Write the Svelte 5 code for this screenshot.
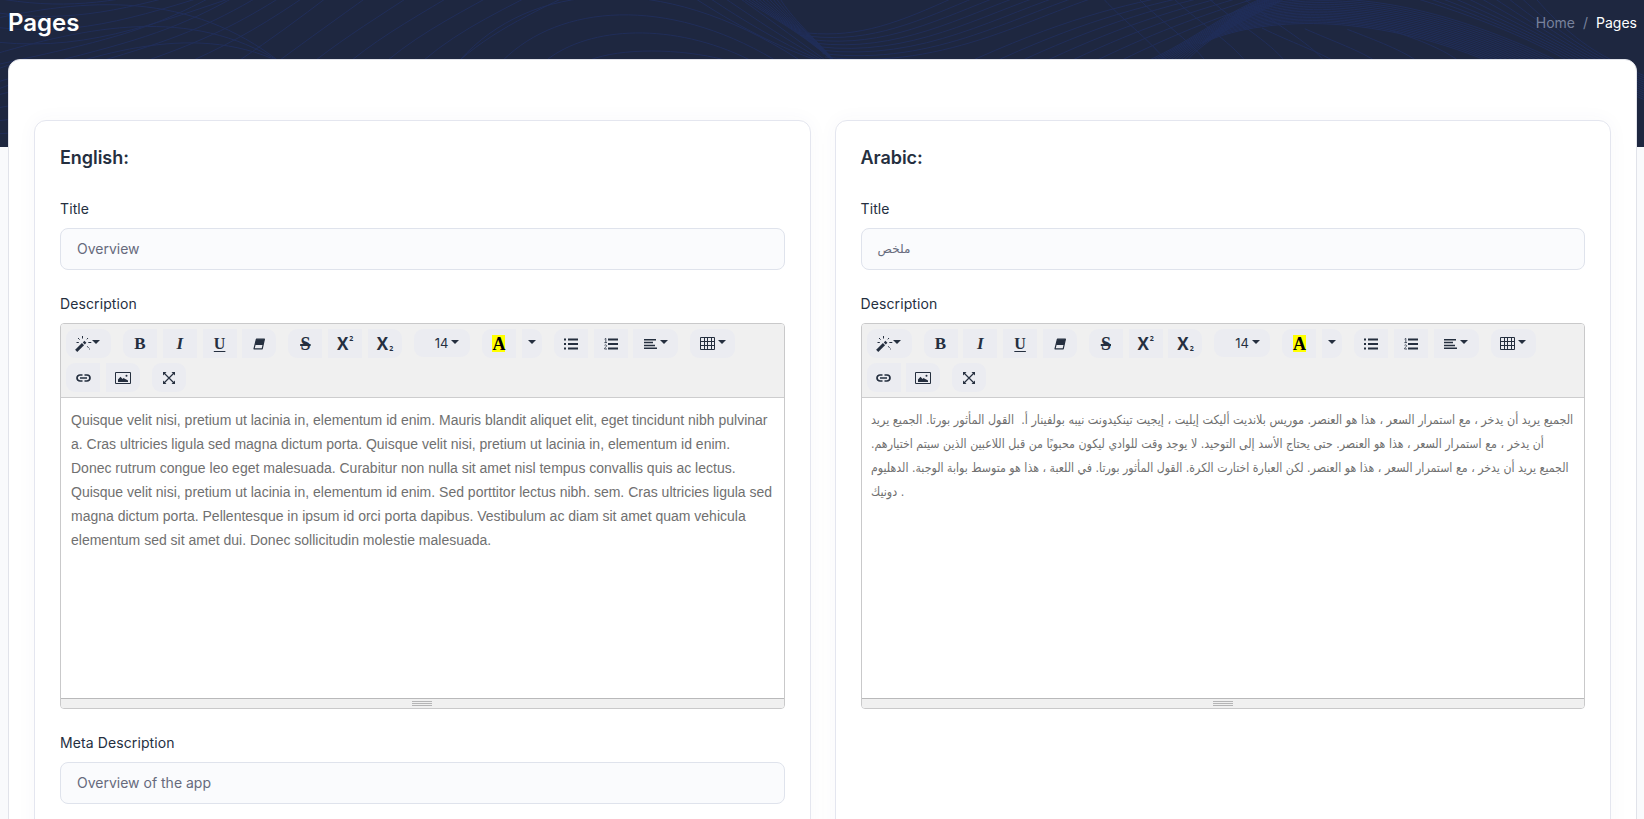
<script>
  // Lines morph evenly from one cubic curve to another; each curve is 8 numbers.
  const families = [
    { n: 3, a: [-20, 22, 90, -4, 190, -8, 280, 62], b: [-10, 92, 90, 55, 190, 20, 280, 62] },
    { n: 4, a: [-20, -5, 50, 10, 100, 5, 165, -10], b: [-20, 40, 80, 55, 150, 25, 255, -10] },
    { n: 6, a: [0, 64, 110, 40, 150, 30, 215, -5], b: [240, 60, 270, 40, 300, 18, 330, -5] },
    { n: 6, a: [280, 60, 310, 38, 335, 20, 370, -5], b: [460, 60, 500, 25, 550, 5, 600, -20] },
    { n: 4, a: [460, 60, 530, -18, 660, -30, 798, 59], b: [590, 60, 620, 48, 680, 48, 725, 60] },
    { n: 4, a: [690, -5, 720, 15, 770, 45, 822, 62], b: [735, -5, 760, 12, 790, 35, 828, 62] },
    { n: 11, a: [738, -5, 765, 14, 795, 28, 832, 60], b: [778, -5, 788, 14, 808, 32, 834, 60] },
    { n: 8, a: [808, 33, 860, 38, 900, 22, 955, -3], b: [825, 57, 950, 72, 1040, 10, 1120, -10] },
    { n: 7, a: [960, 66, 1060, 20, 1120, 5, 1190, -8], b: [1110, 66, 1170, 36, 1210, 20, 1280, -4] },
    { n: 12, a: [1145, 62, 1195, 40, 1230, 8, 1270, -4], b: [1186, 62, 1205, 38, 1245, 20, 1290, -4] },
    { n: 5, a: [1100, -5, 1120, 18, 1150, 40, 1167, 62], b: [1240, -5, 1270, 22, 1310, 42, 1325, 62] },
    { n: 4, a: [1262, 28, 1290, 42, 1320, 52, 1335, 62], b: [1390, 30, 1420, 40, 1445, 50, 1460, 62] },
    { n: 16, a: [1200, 44, 1260, 16, 1370, 12, 1490, 62], b: [1240, 10, 1330, -14, 1430, 0, 1560, 62] },
    { n: 10, a: [1400, -6, 1460, 10, 1530, 38, 1570, 62], b: [1532, -6, 1555, 22, 1585, 48, 1616, 62] },
    { n: 6, a: [-5, 70, 0, 68, 6, 66, 12, 64], b: [-5, 134, 0, 134, 6, 133, 12, 133] },
    { n: 12, a: [1630, 70, 1636, 72, 1640, 74, 1650, 78], b: [1630, 94, 1636, 96, 1640, 98, 1650, 102] }
  ];
  const waves = families.flatMap(({ n, a, b }) =>
    Array.from({ length: n }, (_, i) => {
      const p = a.map((v, k) => +(v + ((b[k] - v) * i) / (n - 1)).toFixed(1));
      return `M${p[0]} ${p[1]}C${p[2]} ${p[3]} ${p[4]} ${p[5]} ${p[6]} ${p[7]}`;
    })
  );

  const english = [
    'Quisque velit nisi, pretium ut lacinia in, elementum id enim. Mauris blandit aliquet elit, eget tincidunt nibh pulvinar',
    'a. Cras ultricies ligula sed magna dictum porta. Quisque velit nisi, pretium ut lacinia in, elementum id enim.',
    'Donec rutrum congue leo eget malesuada. Curabitur non nulla sit amet nisl tempus convallis quis ac lectus.',
    'Quisque velit nisi, pretium ut lacinia in, elementum id enim. Sed porttitor lectus nibh. sem. Cras ultricies ligula sed',
    'magna dictum porta. Pellentesque in ipsum id orci porta dapibus. Vestibulum ac diam sit amet quam vehicula',
    'elementum sed sit amet dui. Donec sollicitudin molestie malesuada.'
  ];
  const arabic = [
    { w: 702, dir: 'rtl', t: 'الجميع يريد أن يدخر ، مع استمرار السعر ، هذا هو العنصر. موريس بلانديت أليكت إيليت ، إيجيت تينكيدونت نيبه بولفينار أ.\u00a0 القول المأثور بورتا. الجميع يريد' },
    { w: 673, dir: 'rtl', t: 'أن يدخر ، مع استمرار السعر ، هذا هو العنصر. حتى يحتاج الأسد إلى التوحيد. لا يوجد وقت للوادي ليكون محبوبًا من قبل اللاعبين الذين سيتم اختيارهم.' },
    { w: 698, dir: 'rtl', t: 'الجميع يريد أن يدخر ، مع استمرار السعر ، هذا هو العنصر. لكن العبارة اختارت الكرة. القول المأثور بورتا. في اللعبة ، هذا هو متوسط بوابة الوجبة. الدهليوم' },
    { w: 33, dir: 'ltr', t: 'دونيك .' }
  ];
  const tools = [
    ['wand'], ['bold', 'italic', 'underline', 'eraser'], ['strike', 'sup', 'sub'], ['size'],
    ['color', 'more'], ['ul', 'ol', 'align'], ['table'], ['link', 'image'], ['full']
  ];
  const columns = [
    { lang: 'English', title: 'Overview', meta: 'Overview of the app' },
    { lang: 'Arabic', title: 'ملخص', meta: null }
  ];

  // Condenses a line horizontally so that it takes the given width.
  function fit(node, width) {
    const apply = () => {
      node.style.transform = 'none';
      node.style.transform = `scaleX(${width / node.offsetWidth})`;
    };
    apply();
    document.fonts?.ready.then(apply);
  }
</script>

{#snippet caret()}<i class="caret"></i>{/snippet}

{#snippet icon(name)}
  {#if name === 'wand'}
    <svg width="17" height="16" viewBox="0 0 17 16"><path d="M1.200 14.800 8 8.200" stroke-width="3" /><path d="m8.800 7.400 1.600-1.600" stroke-width="2.800" /><path d="M7.500 0v2.500M3 2l1.600 1.600M1.500 6.500h2.300M13 2l-1.200 1.300M13.300 6.500h3M12.300 10.300l1.200 1.500M14.200 13h.8" stroke-width="1" /></svg>{@render caret()}
  {:else if name === 'bold'}<b class="glyph">B</b>
  {:else if name === 'italic'}<em class="glyph">I</em>
  {:else if name === 'underline'}<span class="glyph under">U</span>
  {:else if name === 'eraser'}
    <svg width="12" height="12" viewBox="0 0 12 12"><path d="M3.400 1.200h8L9.200 10.800H1z" stroke-width="1.200" stroke-linejoin="round" /><path d="M3.400 1.200h8L10 7H2z" fill="#252f3f" stroke="none" /></svg>
  {:else if name === 'strike'}<span class="glyph strike">S</span>
  {:else if name === 'sup'}<span class="glyph sans">X<small>2</small></span>
  {:else if name === 'sub'}<span class="glyph sans sub">X<small>2</small></span>
  {:else if name === 'size'}<span class="num">14</span>{@render caret()}
  {:else if name === 'color'}<span class="glyph mark">A</span>
  {:else if name === 'more'}{@render caret()}
  {:else if name === 'ul'}
    <svg width="14" height="12" viewBox="0 0 14 12"><path d="M0 1.500h2M0 6h2M0 10.500h2M4 1.500h10M4 6h10M4 10.500h10" stroke-width="2" /></svg>
  {:else if name === 'ol'}
    <svg width="14" height="12" viewBox="0 0 14 12"><path d="M4 1.500h10M4 6h10M4 10.500h10" stroke-width="2" /><path d="M.600 1.200 1.800.400v4.200M.400 4.600H3M.500 7.300c.8-.8 2-.4 2 .5 0 1-2 2-2 3.200h2.500" stroke-width=".8" /></svg>
  {:else if name === 'align'}
    <svg width="13" height="10" viewBox="0 0 13 10"><path d="M0 .750h12M0 3.500h9M0 6.500h11M0 9.250h13" stroke-width="1.400" /></svg>{@render caret()}
  {:else if name === 'table'}
    <svg width="15" height="13" viewBox="0 0 15 13"><path d="M.500.500h14v12H.500zM.500 4.500h14M.500 8.500h14M4.500.500v12M7.500.500v12M11.500.500v12" stroke-width="1" /></svg>{@render caret()}
  {:else if name === 'link'}
    <svg width="15" height="8" viewBox="0 0 15 8"><path d="M6.500 1H4a3 3 0 0 0 0 6h2.500M8.500 1H11a3 3 0 0 1 0 6H8.500M4 4h7" stroke-width="1.700" /></svg>
  {:else if name === 'image'}
    <svg width="16" height="12" viewBox="0 0 16 12"><path d="M.500.500h15v11H.500z" stroke-width="1" /><path d="M3 10V7.500l2.500-2.800L7.500 7l1-1L13 8.500V10z" fill="#252f3f" stroke="none" /><circle cx="11.500" cy="3.800" r="1" fill="#252f3f" stroke="none" /></svg>
  {:else if name === 'full'}
    <svg width="12" height="12" viewBox="0 0 12 12"><path d="m1 1 10 10M11 1 1 11" stroke-width="1.200" /><path d="M0 0h3.500L0 3.500zM12 0v3.500L8.500 0zM0 12V8.500L3.500 12zM12 12H8.500L12 8.500z" fill="#252f3f" stroke="none" /></svg>
  {/if}
{/snippet}

<div class="page">
  <div class="banner">
    <svg width="1644" height="147" viewBox="0 0 1644 147" aria-hidden="true">
      {#each waves as d}<path {d} />{/each}
    </svg>
  </div>
  <header>
    <h1>Pages</h1>
    <nav><span>Home</span><span class="sep">/</span><span class="here">Pages</span></nav>
  </header>
  <main>
    {#each columns as col, c}
      <section>
        <h2>{col.lang}:</h2>
        <div class="label">Title</div>
        <div class="input" class:ar={c === 1}>{col.title}</div>
        <div class="label">Description</div>
        <div class="editor">
          <div class="toolbar">
            {#each tools as group}
              <div class="group">
                {#each group as name}<button class={name}>{@render icon(name)}</button>{/each}
              </div>
            {/each}
          </div>
          <div class="body">
            {#if c === 0}
              {#each english as line}<div class="line">{line}</div>{/each}
            {:else}
              {#each arabic as line}<div class="line ar"><span dir={line.dir} use:fit={line.w}>{line.t}</span></div>{/each}
            {/if}
          </div>
          <div class="status"><i></i><i></i><i></i></div>
        </div>
        {#if col.meta}
          <div class="label">Meta Description</div>
          <div class="input">{col.meta}</div>
        {/if}
      </section>
    {/each}
  </main>
</div>

<style>
  :global(body) { overflow: hidden; }
  .page { position: relative; box-sizing: border-box; height: 819px; overflow: hidden; padding: 0 7px 0 8px; background: #f9fafc; font-family: Inter, sans-serif; color: #252f3f; }
  .banner { position: absolute; inset: 0 0 auto; height: 147px; background: #1e2740; }
  .banner svg { display: block; fill: none; stroke: #22326a; stroke-width: 1; opacity: .6; }
  header { position: relative; display: flex; justify-content: space-between; align-items: center; height: 45px; margin-bottom: 14px; }
  h1 { margin: 0; color: #fff; font-size: 24px; font-weight: 600; }
  nav { display: flex; gap: 8px; font-size: 14px; color: #78829d; }
  nav .here { color: #fff; }
  main { position: relative; display: grid; grid-template-columns: 1fr 1fr; gap: 24px; box-sizing: border-box; height: 900px; padding: 60px 25px; border: 1px solid #e1e3ea; border-radius: 12px; background: #fff; }
  section { box-sizing: border-box; min-width: 0; height: 800px; padding: 24px 25px; border: 1px solid #e4e6ef; border-radius: 12px; background: #fff; box-shadow: 0 0 20px rgba(76, 87, 125, .04); }
  h2 { margin: 0 0 29px; font-size: 18px; line-height: 26px; font-weight: 600; height: 24px; letter-spacing: -.05px; }
  .label { height: 21px; margin-bottom: 9px; font-size: 14px; line-height: 21px; letter-spacing: .1px; }
  .input { box-sizing: border-box; height: 42px; margin-bottom: 23px; padding: 0 16px; border: 1px solid #dfe3ec; border-radius: 8px; background: #fafbfd; font-size: 14px; line-height: 40px; color: #666a7c; }
  .input.ar { font: 12px/40px 'DejaVu Sans', sans-serif; }
  .editor { box-sizing: border-box; height: 386px; margin-bottom: 23px; border: 1px solid #c9c9ca; border-radius: 4px; overflow: hidden; }
  .toolbar { box-sizing: border-box; display: flex; flex-wrap: wrap; align-content: flex-start; gap: 5px 12px; height: 74px; padding: 5px 0 0 5px; border-bottom: 1px solid #cdcdce; background: #f0f0f0; }
  .group { display: flex; gap: 5.800px; }
  button { box-sizing: border-box; display: flex; align-items: center; justify-content: center; width: 34px; height: 29px; padding: 0; border: 0; background: #ebecf1; color: #252f3f; font-family: Inter, sans-serif; }
  button:first-child { border-top-left-radius: 9px; border-bottom-left-radius: 9px; }
  button:last-child { border-top-right-radius: 9px; border-bottom-right-radius: 9px; }
  button svg { display: block; fill: none; stroke: #252f3f; }
  .wand, .align, .table { width: 45px; }
  .wand { padding-right: 2px; }
  .align, .table { gap: 3px; }
  .size { width: 56px; height: 28px; gap: 3px; padding-left: 10px; }
  .more { width: 20px; }
  .num { font-size: 13px; }
  .caret { width: 0; height: 0; margin-top: -3px; border: 4px solid transparent; border-top-color: #252f3f; border-bottom: 0; }
  .glyph { font-family: 'Liberation Serif', serif; font-size: 17px; line-height: 18px; font-weight: 700; }
  .under { font-size: 16px; text-decoration: underline; text-decoration-thickness: 1px; text-underline-offset: 2px; }
  .strike { font-size: 18px; text-decoration: line-through; text-decoration-thickness: 1.500px; }
  .sans { position: relative; font-family: 'Open Sans', sans-serif; font-size: 17px; padding-right: 5px; }
  .sans small { position: absolute; right: 0; top: -3px; font-size: 7px; line-height: 14px; }
  .sans.sub small { top: 7px; }
  .mark { width: 13px; height: 17px; margin-top: -1px; background: #ff0; color: #000; text-align: center; line-height: 19px; font-size: 18px; }
  .body { box-sizing: border-box; height: 300px; padding: 10px; color: #707070; background: #fff; }
  .line { height: 24px; font: 14px/24px 'Liberation Sans', sans-serif; white-space: pre; }
  .line.ar { font: 12.500px/23px 'DejaVu Sans', sans-serif; }
  .line.ar span { display: inline-block; margin-left: -1px; transform-origin: left center; }
  .status { box-sizing: border-box; display: flex; flex-direction: column; align-items: center; gap: 1px; height: 10px; padding-top: 2px; border-top: 1px solid #b9b9ba; background: #f0f0f0; }
  .status i { width: 20px; height: 1px; background: #b5b5b6; }
</style>
